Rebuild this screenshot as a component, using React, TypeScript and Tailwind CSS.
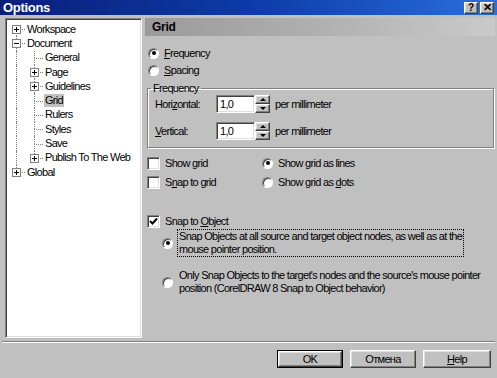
import type { ReactNode } from 'react'

type TreeItem = {
  label: string
  level: number
  expander?: '+' | '-'
  selected?: boolean
  // which levels carry a vertical line through this row
  through: number[]
  first?: boolean
  last?: boolean
}

const treeItems: TreeItem[] = [
  { label: 'Workspace', level: 0, expander: '+', through: [], first: true },
  { label: 'Document', level: 0, expander: '-', through: [] },
  { label: 'General', level: 1, through: [0] },
  { label: 'Page', level: 1, expander: '+', through: [0] },
  { label: 'Guidelines', level: 1, expander: '+', through: [0] },
  { label: 'Grid', level: 1, through: [0], selected: true },
  { label: 'Rulers', level: 1, through: [0] },
  { label: 'Styles', level: 1, through: [0] },
  { label: 'Save', level: 1, through: [0] },
  { label: 'Publish To The Web', level: 1, expander: '+', through: [0], last: true },
  { label: 'Global', level: 0, expander: '+', through: [], last: true },
]

const raised =
  'border border-t-white border-l-white border-b-[#404040] border-r-[#404040] shadow-[inset_-1px_-1px_0_#808080,inset_1px_1px_0_#dfdfdf]'
const sunken =
  'border border-t-[#808080] border-l-[#808080] border-b-white border-r-white shadow-[inset_1px_1px_0_#404040,inset_-1px_-1px_0_#dfdfdf]'

function TreeRow({ item }: { item: TreeItem }) {
  const cells = []
  for (let l = 0; l <= item.level; l++) {
    const own = l === item.level
    cells.push(
      <div key={l} className="relative h-full w-[18px] shrink-0">
        {!own && item.through.includes(l) && (
          <span className="absolute left-[9px] top-0 h-full border-l border-dotted border-[#808080]" />
        )}
        {own && (
          <>
            {!item.first && <span className="absolute left-[9px] top-0 h-1/2 border-l border-dotted border-[#808080]" />}
            {!item.last && <span className="absolute left-[9px] top-1/2 h-1/2 border-l border-dotted border-[#808080]" />}
            <span className="absolute left-[9px] top-1/2 w-[9px] border-t border-dotted border-[#808080]" />
            {item.expander && (
              <span className="absolute left-[5px] top-[3px] flex h-[9px] w-[9px] items-center justify-center border border-[#808080] bg-white">
                <span className="absolute h-px w-[5px] bg-black" />
                {item.expander === '+' && <span className="absolute h-[5px] w-px bg-black" />}
              </span>
            )}
          </>
        )}
      </div>,
    )
  }
  return (
    <div className="flex h-[14.3px] items-center">
      {cells}
      <span className={`ml-[1px] px-[1px] leading-[13px] ${item.selected ? 'bg-[#c0c0c0]' : ''}`}>{item.label}</span>
    </div>
  )
}

function Radio({ checked }: { checked?: boolean }) {
  return (
    <span className="relative flex h-[11px] w-[11px] shrink-0 items-center justify-center rounded-full border border-t-[#808080] border-l-[#808080] border-b-white border-r-white bg-white shadow-[inset_1px_1px_0_#404040]">
      {checked && <span className="h-[4px] w-[4px] rounded-full bg-black" />}
    </span>
  )
}

function Checkbox({ checked }: { checked?: boolean }) {
  return (
    <span className={`flex h-[13px] w-[13px] shrink-0 items-center justify-center bg-white ${sunken}`}>
      {checked && (
        <svg width="9" height="9" viewBox="0 0 9 9">
          <path d="M1 4 L3.5 6.5 L8 1.5" stroke="#000" strokeWidth="2" fill="none" />
        </svg>
      )}
    </span>
  )
}

function Spin({ value }: { value: string }) {
  return (
    <div className="flex h-[18px]">
      <div className={`flex w-[39px] items-center bg-white pl-[3px] ${sunken}`}>{value}</div>
      <div className="flex w-[15px] flex-col">
        <div className={`flex h-1/2 items-center justify-center bg-[#c0c0c0] ${raised}`}>
          <span className="border-x-[3px] border-b-[3px] border-x-transparent border-b-black" />
        </div>
        <div className={`flex h-1/2 items-center justify-center bg-[#c0c0c0] ${raised}`}>
          <span className="border-x-[3px] border-t-[3px] border-x-transparent border-t-black" />
        </div>
      </div>
    </div>
  )
}

function Option({ control, children, className = '' }: { control: ReactNode; children: ReactNode; className?: string }) {
  return (
    <div className={`flex h-[14px] items-center gap-[5px] ${className}`}>
      {control}
      <span>{children}</span>
    </div>
  )
}

function DialogButton({ children, isDefault, width }: { children: ReactNode; isDefault?: boolean; width: string }) {
  return (
    <div className={`${width} h-[18px] ${isDefault ? 'border border-black' : ''}`}>
      <div className={`flex h-full items-center justify-center bg-[#c0c0c0] ${raised}`}>{children}</div>
    </div>
  )
}

export default function App() {
  return (
    <div className="flex h-[378px] w-[497px] flex-col overflow-hidden bg-[#c0c0c0] font-['Liberation_Sans',Arial,sans-serif] text-[11px] tracking-[-0.7px] text-black">
      <div className="flex h-[15px] items-center justify-between bg-gradient-to-r from-[#0a1f7a] via-[#0d3aa8] to-[#2a6fdc] pl-[3px] pr-[3px]">
        <span className="text-[13px] font-bold tracking-[-0.3px] text-white">Options</span>
        <div className="flex gap-[2px]">
          <div className={`flex h-[12px] w-[14px] items-center justify-center bg-[#c0c0c0] text-[10px] font-bold leading-none tracking-normal ${raised}`}>?</div>
          <div className={`flex h-[12px] w-[14px] items-center justify-center bg-[#c0c0c0] text-[11px] font-bold leading-none tracking-normal ${raised}`}>✕</div>
        </div>
      </div>

      <div className="mt-[3px] flex h-[320px]">
        <div className={`ml-[5px] h-full w-[137px] bg-white pt-[3px] pl-[1px] ${sunken}`}>
          {treeItems.map((item) => (
            <TreeRow key={item.label} item={item} />
          ))}
        </div>

        <div className="ml-[3px] mr-[2px] flex flex-1 flex-col">
          <div className="flex h-[18px] items-center bg-gradient-to-r from-[#9a9a9a] via-[#b0b0b0] to-[#cacaca] pl-[7px] text-[12px] font-bold tracking-[-0.3px]">
            Grid
          </div>

          <div className="mt-[10px] flex flex-col gap-[3px] pl-[3px]">
            <Option control={<Radio checked />}>
              <span className="underline">F</span>requency
            </Option>
            <Option control={<Radio />}>
              <span className="underline">S</span>pacing
            </Option>
          </div>

          <fieldset className="mt-[5px] ml-[2px] mr-[1px] border border-[#808080] pb-[7px] shadow-[1px_1px_0_#fff,inset_1px_1px_0_#fff]">
            <legend className="ml-[3px] px-[2px] leading-[13px]">Frequency</legend>
            <div className="flex items-center pl-[7px]">
              <span className="w-[61px]">
                Hori<span className="underline">z</span>ontal:
              </span>
              <Spin value="1,0" />
              <span className="ml-[5px]">per millimeter</span>
            </div>
            <div className="mt-[9px] flex items-center pl-[7px]">
              <span className="w-[61px]">
                <span className="underline">V</span>ertical:
              </span>
              <Spin value="1,0" />
              <span className="ml-[5px]">per millimeter</span>
            </div>
          </fieldset>

          <div className="mt-[8px] flex pl-[2px]">
            <div className="flex w-[115px] flex-col gap-[5px]">
              <Option control={<Checkbox />}>Show grid</Option>
              <Option control={<Checkbox />}>
                S<span className="underline">n</span>ap to grid
              </Option>
            </div>
            <div className="flex flex-col gap-[5px]">
              <Option control={<Radio checked />}>Show grid as lines</Option>
              <Option control={<Radio />}>
                Show grid as <span className="underline">d</span>ots
              </Option>
            </div>
          </div>

          <Option className="mt-[25px] pl-[2px]" control={<Checkbox checked />}>
            Snap to <span className="underline">O</span>bject
          </Option>

          <div className="mt-[1px] flex items-center gap-[4px] pl-[17px]">
            <Radio checked />
            <div className="border border-dotted border-black px-[1px] leading-[13px]">
              Snap Objects at all source and target object nodes, as well as at the
              <br />
              mouse pointer position.
            </div>
          </div>

          <div className="mt-[12px] flex items-center gap-[5px] pl-[17px]">
            <Radio />
            <div className="pl-[1px] leading-[13px]">
              Only Snap Objects to the target's nodes and the source's mouse pointer
              <br />
              position (CorelDRAW 8 Snap to Object behavior)
            </div>
          </div>
        </div>
      </div>

      <div className="mx-[2px] mt-[3px] border-t border-b border-t-[#808080] border-b-white" />

      <div className="mt-[7px] flex justify-end gap-[7px] pr-[6px]">
        <DialogButton isDefault width="w-[66px]">OK</DialogButton>
        <DialogButton width="w-[66px]">Отмена</DialogButton>
        <DialogButton width="w-[68px]">
          <span>
            <span className="underline">H</span>elp
          </span>
        </DialogButton>
      </div>
    </div>
  )
}
